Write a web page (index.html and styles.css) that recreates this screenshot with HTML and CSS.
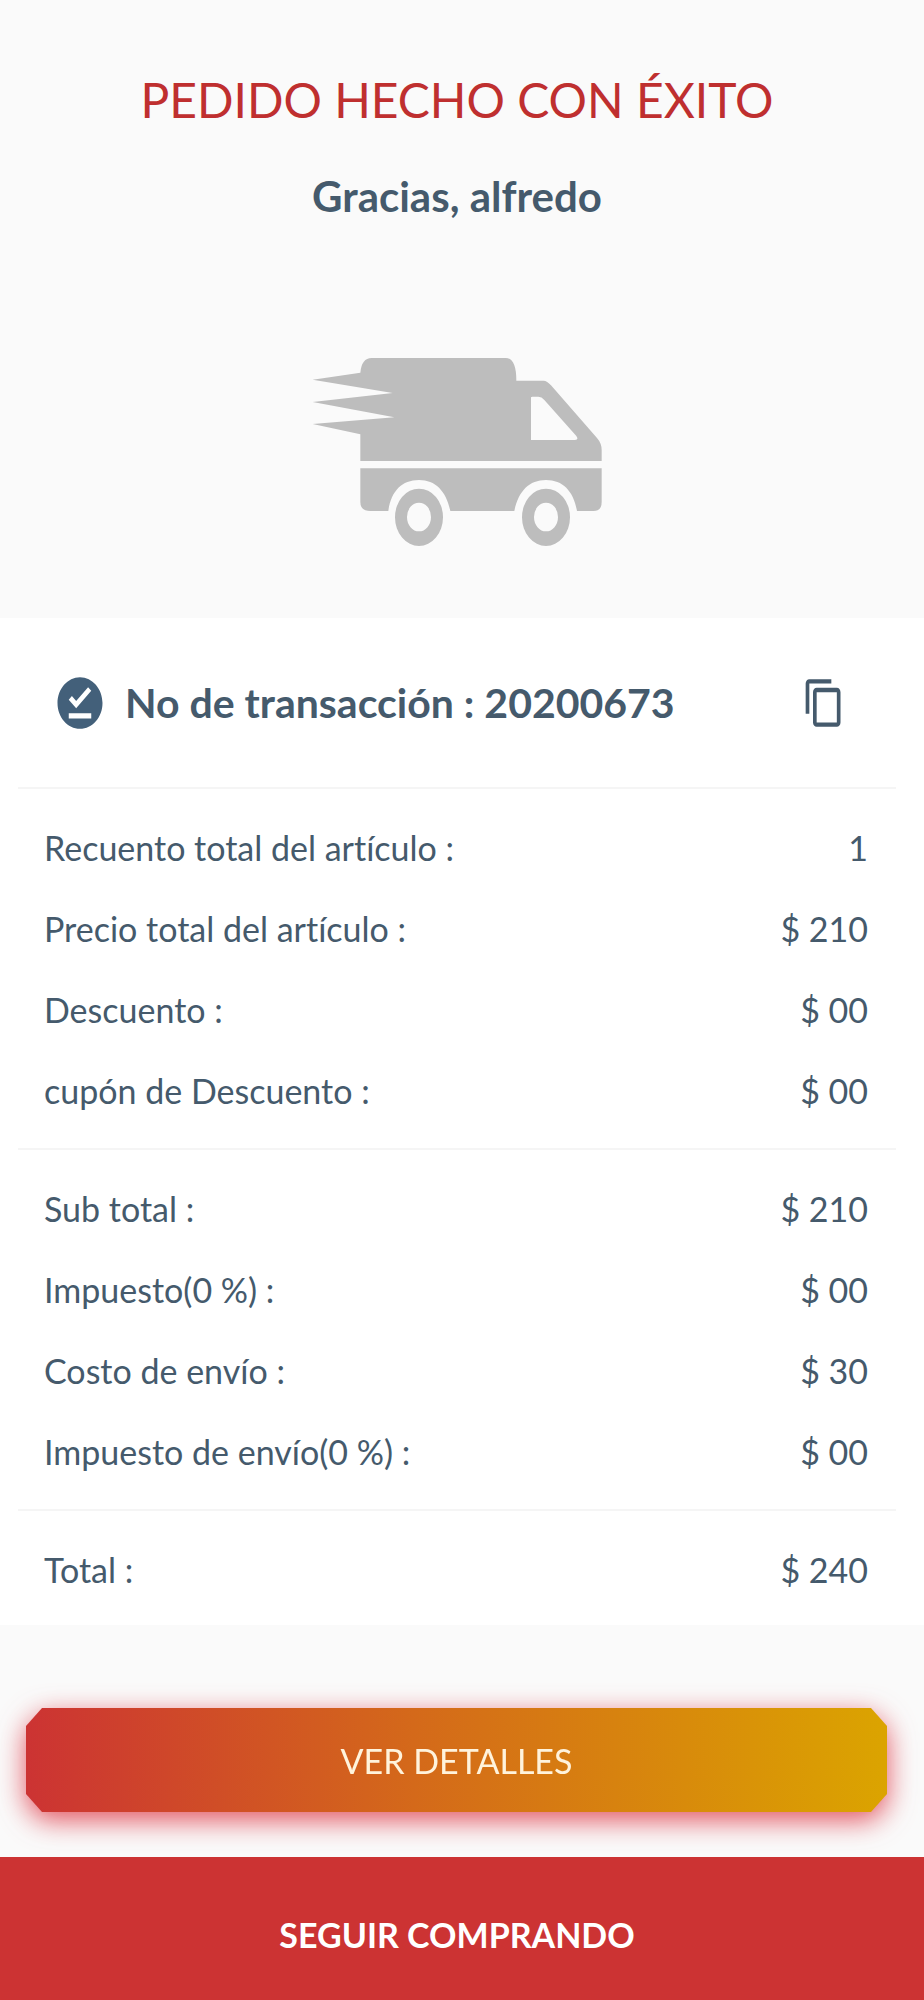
FILE: index.html
```html
<!DOCTYPE html>
<html lang="es">
<head>
<meta charset="utf-8">
<meta name="viewport" content="width=device-width, initial-scale=1">
<title>Pedido hecho con éxito</title>
<link rel="stylesheet" href="styles.css">
</head>
<body>
<main class="page">
  <header class="hero">
    <h1 class="hero-title">PEDIDO HECHO CON ÉXITO</h1>
    <p class="hero-thanks">Gracias, alfredo</p>
    <svg class="truck" viewBox="0 0 872 570" aria-hidden="true">
      <path fill-rule="evenodd" d="M146 309V229L3 198L248 178L3 132L243 105L3 65L146 44Q150 0 180 0H582Q614 0 614 68H696Q706 68 718 82L856 240Q870 256 870 276V309ZM658 118V246H790Q802 246 794 234L698 126Q690 116 680 116H662Z"/>
      <path d="M146 331H870V432Q870 459 846 459H796C786 400 754 366 703 366C652 366 620 400 608 459H416C404 400 372 366 322 366C270 366 238 400 230 459H176Q146 459 146 432Z"/>
      <path fill-rule="evenodd" d="M322 392a72 86 0 1 0 0 172a72 86 0 1 0 0-172ZM322 434a36 43 0 1 1 0 86a36 43 0 1 1 0-86Z"/>
      <path fill-rule="evenodd" d="M703 392a72 86 0 1 0 0 172a72 86 0 1 0 0-172ZM703 434a36 43 0 1 1 0 86a36 43 0 1 1 0-86Z"/>
    </svg>
  </header>

  <section class="summary">
    <div class="transaction">
      <svg class="icon-pin" viewBox="0 0 24 24" preserveAspectRatio="none" aria-hidden="true">
        <path d="M12 2C6.500 2 2 6.500 2 12s4.500 10 10 10 10-4.500 10-10S17.500 2 12 2zm5 16H7v-2h10v2zm-6.700-4L7 10.700l1.400-1.400 1.900 1.900 5.300-5.300L17 7.300 10.300 14z"/>
      </svg>
      <h2 class="transaction-number">No de transacción : 20200673</h2>
      <button class="copy" type="button" aria-label="Copiar">
        <svg class="icon-copy" viewBox="0 0 24 24" preserveAspectRatio="none" aria-hidden="true">
          <path d="M16 1H4c-1.100 0-2 .9-2 2v14h2V3h12V1zm3 4H8c-1.100 0-2 .9-2 2v14c0 1.100.9 2 2 2h11c1.100 0 2-.9 2-2V7c0-1.100-.9-2-2-2zm0 16H8V7h11v14z"/>
        </svg>
      </button>
    </div>
    <dl class="group">
      <div class="row"><dt>Recuento total del artículo :</dt><dd>1</dd></div>
      <div class="row"><dt>Precio total del artículo :</dt><dd>$ 210</dd></div>
      <div class="row"><dt>Descuento :</dt><dd>$ 00</dd></div>
      <div class="row"><dt>cupón de Descuento :</dt><dd>$ 00</dd></div>
    </dl>
    <dl class="group">
      <div class="row"><dt>Sub total :</dt><dd>$ 210</dd></div>
      <div class="row"><dt>Impuesto(0 %) :</dt><dd>$ 00</dd></div>
      <div class="row"><dt>Costo de envío :</dt><dd>$ 30</dd></div>
      <div class="row"><dt>Impuesto de envío(0 %) :</dt><dd>$ 00</dd></div>
    </dl>
    <dl class="group">
      <div class="row"><dt>Total :</dt><dd>$ 240</dd></div>
    </dl>
  </section>

  <div class="details">
    <button class="details-button" type="button">VER DETALLES</button>
  </div>
  <button class="continue-button" type="button">SEGUIR COMPRANDO</button>
</main>
</body>
</html>
```

FILE: styles.css
```css
* {
  box-sizing: border-box;
}

body {
  margin: 0;
  background: #fafafa;
  color: #455a6c;
  font-family: Lato, sans-serif;
  font-size: 34px;
  font-variant-ligatures: none;
}

h1, h2, p, dl, dd {
  margin: 0;
}

button {
  border: 0;
  font: inherit;
  cursor: pointer;
}

.page {
  display: flex;
  flex-direction: column;
  min-height: 100vh;
}

.hero {
  display: flex;
  flex-direction: column;
  align-items: center;
  padding: 64px 10px 70px 0;
}

.hero-title {
  color: #bf2f2f;
  font-size: 48px;
  font-weight: 400;
  line-height: 72px;
}

.hero-thanks {
  margin-top: 32px;
  font-size: 42px;
  font-weight: 700;
  line-height: 56px;
}

.truck {
  width: 292px;
  height: 190px;
  margin-top: 134px;
  fill: #bdbdbd;
}

.summary {
  padding: 0 28px 0 18px;
  background: #fff;
}

.transaction {
  display: flex;
  align-items: center;
  gap: 18px;
  height: 169px;
  padding: 0 50px 0 35px;
}

.icon-pin {
  width: 54px;
  height: 62px;
  fill: #43607a;
}

.transaction-number {
  flex: 1;
  font-size: 41px;
  font-weight: 700;
}

.copy {
  display: flex;
  padding: 0;
  background: none;
}

.icon-copy {
  width: 44px;
  height: 52px;
  fill: #455a6c;
}

.group {
  padding: 18px 28px 17px 26px;
  border-top: 2px solid #f5f5f5;
}

.group:last-child {
  padding-bottom: 15px;
}

.row {
  display: flex;
  justify-content: space-between;
  line-height: 81px;
}

.details {
  padding: 83px 37px 45px 26px;
  filter: drop-shadow(0 8px 14px rgba(220, 40, 55, 0.8));
}

.details-button {
  width: 100%;
  height: 104px;
  background: linear-gradient(90deg, #cc3333, #d4691a 45%, #dba400);
  color: #fff3dc;
  clip-path: polygon(16px 0, calc(100% - 16px) 0, 100% 18px, 100% calc(100% - 18px), calc(100% - 16px) 100%, 16px 100%, 0 calc(100% - 18px), 0 18px);
}

.continue-button {
  position: relative;
  flex: 1 0 auto;
  padding: 54px 10px 42px 0;
  background: #cc3333;
  color: #fff;
  font-weight: 700;
}
```
